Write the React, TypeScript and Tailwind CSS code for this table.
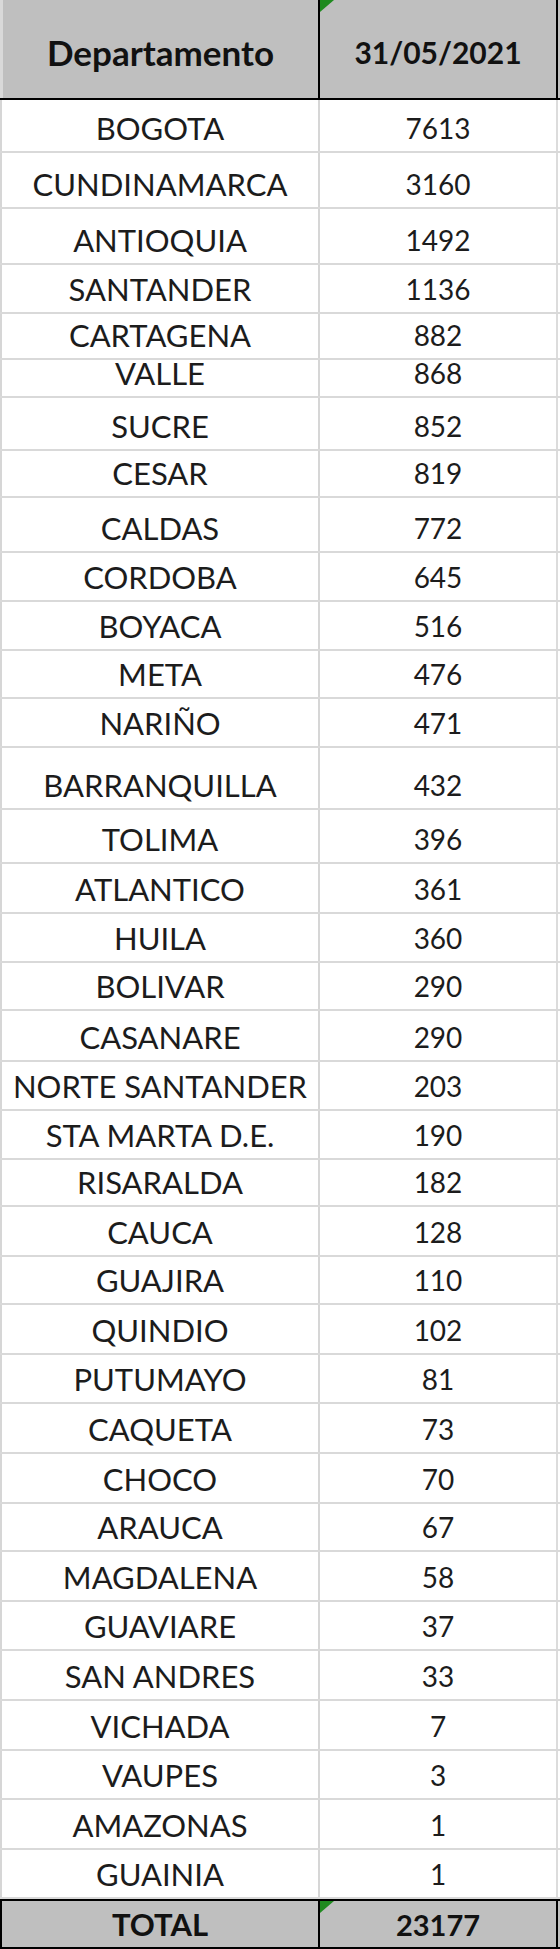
import React from "react";

const rows: [string, string, number][] = [
  ["BOGOTA", "7613", 53],
  ["CUNDINAMARCA", "3160", 56],
  ["ANTIOQUIA", "1492", 56],
  ["SANTANDER", "1136", 49],
  ["CARTAGENA", "882", 46],
  ["VALLE", "868", 38],
  ["SUCRE", "852", 53],
  ["CESAR", "819", 47],
  ["CALDAS", "772", 55],
  ["CORDOBA", "645", 49],
  ["BOYACA", "516", 49],
  ["META", "476", 48],
  ["NARIÑO", "471", 49],
  ["BARRANQUILLA", "432", 62],
  ["TOLIMA", "396", 54],
  ["ATLANTICO", "361", 50],
  ["HUILA", "360", 49],
  ["BOLIVAR", "290", 48],
  ["CASANARE", "290", 51],
  ["NORTE SANTANDER", "203", 49],
  ["STA MARTA D.E.", "190", 49],
  ["RISARALDA", "182", 47],
  ["CAUCA", "128", 50],
  ["GUAJIRA", "110", 48],
  ["QUINDIO", "102", 50],
  ["PUTUMAYO", "81", 49],
  ["CAQUETA", "73", 50],
  ["CHOCO", "70", 50],
  ["ARAUCA", "67", 48],
  ["MAGDALENA", "58", 50],
  ["GUAVIARE", "37", 49],
  ["SAN ANDRES", "33", 50],
  ["VICHADA", "7", 50],
  ["VAUPES", "3", 49],
  ["AMAZONAS", "1", 50],
  ["GUAINIA", "1", 49],
];

function Flag() {
  return (
    <svg
      className="absolute left-0 top-0"
      width="14"
      height="12"
      viewBox="0 0 14 12"
    >
      <polygon points="0,0 14,0 0,12" fill="#1f8a1f" />
    </svg>
  );
}

export default function App() {
  return (
    <div
      className="w-[560px] bg-white text-[#1c1c1c]"
      style={{ fontFamily: "Lato, 'Liberation Sans', sans-serif" }}
    >
      <div className="grid h-[100px] grid-cols-[320px_1fr] border-b-2 border-black bg-[#bfbfbf] font-bold text-[#111]">
        <div className="flex items-center justify-center border-l-[3px] border-r-2 border-l-[#d9d9d9] border-r-black pt-[6px] text-[35px]">
          Departamento
        </div>
        <div className="relative mr-[2px] flex items-center justify-center border-r-2 border-black pt-[6px] text-[30px]">
          <Flag />
          31/05/2021
        </div>
      </div>
      {rows.map(([name, value, h]) => (
        <div
          key={name}
          className="grid grid-cols-[320px_1fr] border-b-2 border-[#d9d9d9]"
          style={{ height: h }}
        >
          <div className="flex items-end justify-center whitespace-nowrap border-l-2 border-r-2 border-[#d6d6d6] text-[31px]">
            <span className="mb-[10px] block leading-[26px]">{name}</span>
          </div>
          <div className="mr-[2px] flex items-end justify-center border-r-2 border-[#dcdcdc] text-[28px]">
            <span className="mb-[10px] block leading-[26px]">{value}</span>
          </div>
        </div>
      ))}
      <div className="grid h-[50px] grid-cols-[320px_1fr] border-y-2 border-black bg-[#bfbfbf] font-bold text-[#111]">
        <div className="flex items-center justify-center border-l-2 border-r-2 border-black text-[31px]">
          TOTAL
        </div>
        <div className="relative mr-[2px] flex items-center justify-center border-r-2 border-black text-[29px]">
          <Flag />
          23177
        </div>
      </div>
    </div>
  );
}
